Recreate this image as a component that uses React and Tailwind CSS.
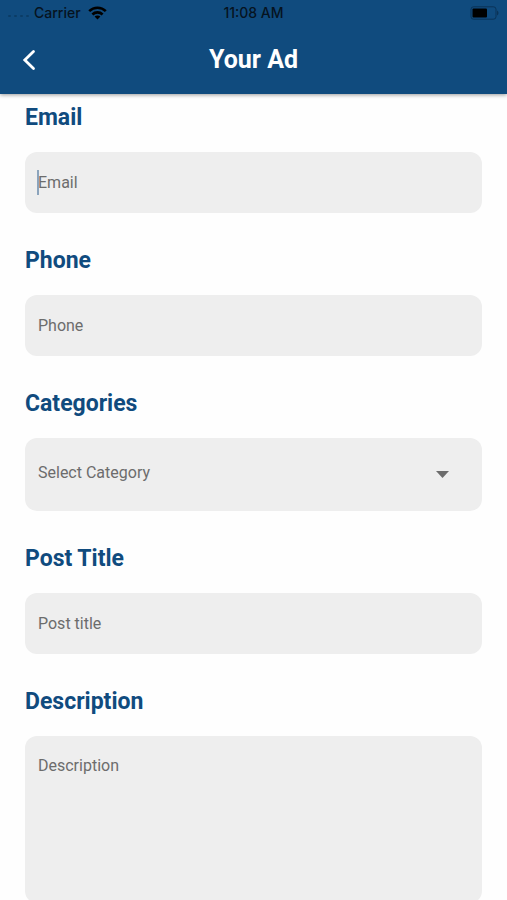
import { useState } from "react";

const inputClass =
  "block h-[61px] w-full rounded-xl bg-[#eeeeee] px-[13px] text-base text-[#6c6c6c] outline-none placeholder:text-[#6c6c6c] placeholder:opacity-100";

const StatusBar = () => (
  <div className="grid h-[26px] grid-cols-3 items-center px-2 font-['Inter',sans-serif] text-sm font-medium text-[#06131f]">
    <div className="flex items-center gap-[5px]">
      <svg width="21" height="10" viewBox="0 0 21 10" fill="#0b3c66" aria-hidden="true">
        <rect x="0" y="7" width="3" height="2" rx="1" />
        <rect x="6" y="7" width="3" height="2" rx="1" />
        <rect x="12" y="7" width="3" height="2" rx="1" />
        <rect x="18" y="7" width="3" height="2" rx="1" />
      </svg>
      <span>Carrier</span>
      <svg className="ml-0.5" width="19" height="14" viewBox="0 0 19 14" fill="none" stroke="#000" strokeWidth="2.6" aria-hidden="true">
        <path d="M1.2 5.2C5.8 0.6 13.2 0.6 17.8 5.2" />
        <path d="M4.4 8.5C7.2 5.7 11.8 5.7 14.6 8.5" />
        <path d="M9.5 13.6L6.6 10.6C8.2 9.1 10.8 9.1 12.4 10.6Z" fill="#000" stroke="none" />
      </svg>
    </div>
    <span className="text-center whitespace-nowrap">11:08 AM</span>
    <svg className="justify-self-end" width="29" height="14" viewBox="0 0 29 14" fill="none" aria-hidden="true">
      <rect x="1" y="0.8" width="25" height="12.4" rx="2.5" stroke="#0a3357" />
      <rect x="2.5" y="2.4" width="14.5" height="9.2" rx="1" fill="#000" />
      <path d="M27 4.5C29 5.5 29 8.5 27 9.5Z" fill="#0a3357" />
    </svg>
  </div>
);

const Header = () => (
  <header className="relative z-10 shrink-0 bg-[#104b7e] shadow-[0_1px_4px_rgba(0,0,0,0.4)]">
    <StatusBar />
    <div className="grid h-[68px] grid-cols-[48px_1fr_48px] items-center">
      <button type="button" aria-label="Back" className="flex h-12 items-center pl-[22px]">
        <svg width="14" height="22" viewBox="0 0 14 22" fill="none" stroke="#fff" strokeWidth="2.8" aria-hidden="true">
          <path d="M11.5 2.5L2.8 11L11.5 19.5" strokeLinecap="round" strokeLinejoin="miter" />
        </svg>
      </button>
      <h1 className="text-center text-[25px] leading-8 font-bold text-white">Your Ad</h1>
    </div>
  </header>
);

const Field = ({ id, label, children }) => (
  <div>
    <label htmlFor={id} className="mb-4 block text-[23px] leading-9 font-bold text-[#104b7e]">
      {label}
    </label>
    {children}
  </div>
);

const App = () => {
  const [category, setCategory] = useState("");

  return (
    <div className="flex h-screen flex-col bg-[#fefefe] font-['Roboto',sans-serif]">
      <Header />
      <main className="min-h-0 flex-1 overflow-y-auto [scrollbar-width:none]">
        <form className="flex flex-col gap-[30px] px-[25px] pt-1.5 pb-8">
          <Field id="email" label="Email">
            <div className="relative">
              <input id="email" type="email" placeholder="Email" className={`${inputClass} caret-transparent`} />
              <span className="absolute top-[18px] left-3 h-[25px] w-0.5 bg-[#8ca4bc]" />
            </div>
          </Field>
          <Field id="phone" label="Phone">
            <input id="phone" type="tel" placeholder="Phone" className={inputClass} />
          </Field>
          <Field id="category" label="Categories">
            <div className="relative">
              <select
                id="category"
                value={category}
                onChange={(e) => setCategory(e.target.value)}
                className="block h-[73px] w-full appearance-none rounded-xl bg-[#eeeeee] px-[13px] pb-1 text-base text-[#6c6c6c] outline-none"
              >
                <option value="">Select Category</option>
              </select>
              <svg
                className="pointer-events-none absolute top-[33px] right-[33px]"
                width="13"
                height="7"
                viewBox="0 0 13 7"
                fill="#6c6c6c"
                aria-hidden="true"
              >
                <path d="M0 0H13L6.5 7Z" />
              </svg>
            </div>
          </Field>
          <Field id="title" label="Post Title">
            <input id="title" type="text" placeholder="Post title" className={inputClass} />
          </Field>
          <Field id="description" label="Description">
            <textarea
              id="description"
              placeholder="Description"
              className="block h-[167px] w-full resize-none rounded-xl bg-[#eeeeee] px-[13px] py-[18px] text-base text-[#6c6c6c] outline-none placeholder:text-[#6c6c6c] placeholder:opacity-100"
            />
          </Field>
        </form>
      </main>
    </div>
  );
};

export default App;
